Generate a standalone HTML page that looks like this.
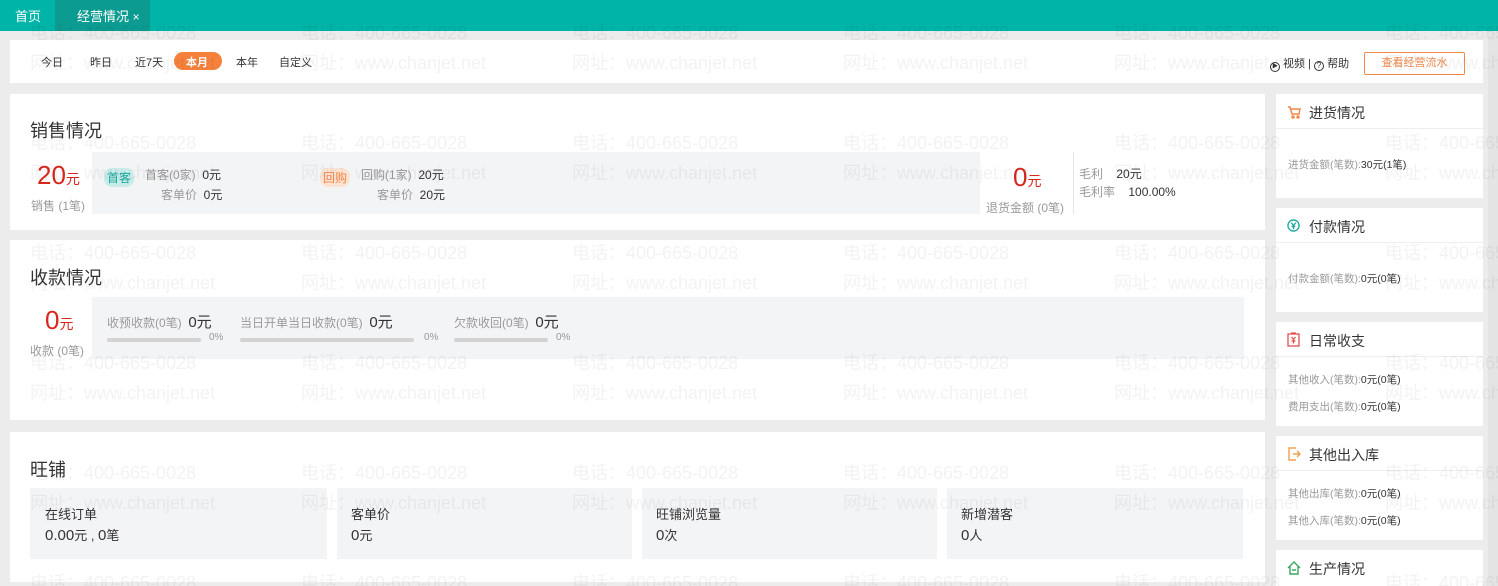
<!DOCTYPE html>
<html><head><meta charset="utf-8">
<style>
*{margin:0;padding:0;box-sizing:border-box}
html,body{width:1498px;height:586px;overflow:hidden}
body{background:#ececec;font-family:"Liberation Sans","Noto Sans CJK SC",sans-serif;position:relative;color:#333}
.a{position:absolute}
.top{left:0;top:0;width:1498px;height:31px;background:#00b4a8}
.card{background:#fff;position:absolute}
.t{font-size:12px;white-space:nowrap}
.g{color:#999}
.wm{position:absolute;font-size:18px;color:rgba(0,0,0,0.05);white-space:nowrap;pointer-events:none;z-index:10}
.box{background:#f3f4f5;position:absolute}
.bar{position:absolute;height:4px;background:#d3d3d3;border-radius:2px}
.rh{position:absolute;left:0;top:0;width:207px;height:35px;border-bottom:1px solid #eee}
.rh span{position:absolute;left:33px;top:9px;font-size:14px;color:#333}
</style></head><body>
<div class="a top"></div>
<div class="a" style="left:55px;top:0;width:95px;height:31px;background:#0c9b90"></div>
<div class="a t" style="left:15px;top:6px;font-size:13px;color:#fff">首页</div>
<div class="a t" style="left:77px;top:6px;font-size:13px;color:#fff">经营情况 <span style="font-size:12px">×</span></div>

<div class="card" style="left:10px;top:40px;width:1473px;height:43px"></div>
<div class="a t" style="left:41px;top:54px;font-size:11px">今日</div>
<div class="a t" style="left:90px;top:54px;font-size:11px">昨日</div>
<div class="a t" style="left:135px;top:54px;font-size:11px">近7天</div>
<div class="a" style="left:174px;top:52px;width:48px;height:18px;background:#f5813c;border-radius:9px"></div>
<div class="a t" style="left:186px;top:54px;font-size:11px;color:#fff;font-weight:bold">本月</div>
<div class="a t" style="left:236px;top:54px;font-size:11px">本年</div>
<div class="a t" style="left:279px;top:54px;font-size:11px">自定义</div>
<div class="a t" style="left:1270px;top:55px;font-size:11px"><span style="display:inline-block;width:10px;height:10px;border:1px solid #333;border-radius:50%;font-size:6px;line-height:8px;text-align:center;vertical-align:-1px">▶</span> 视频 | <span style="display:inline-block;width:10px;height:10px;border:1px solid #333;border-radius:50%;font-size:8px;line-height:8px;text-align:center;vertical-align:-1px">?</span> 帮助</div>
<div class="a" style="left:1364px;top:52px;width:101px;height:23px;border:1px solid #f0884a;border-radius:2px;color:#f0884a;font-size:11px;text-align:center;line-height:21px">查看经营流水</div>

<div class="card" style="left:10px;top:94px;width:1255px;height:136px"></div>
<div class="a" style="left:30px;top:117px;font-size:18px;color:#333">销售情况</div>
<div class="box" style="left:92px;top:152px;width:888px;height:62px"></div>
<div class="a" style="left:37px;top:160px;font-size:26px;color:#d9261c">20<span style="font-size:14px">元</span></div>
<div class="a t g" style="left:31px;top:197px">销售 (1笔)</div>
<div class="a t" style="left:104px;top:168px;background:#c9ecea;color:#1aa89c;border-radius:8px;padding:1px 3px">首客</div>
<div class="a t" style="left:145px;top:166px"><span class="g">首客(0家)</span>&nbsp; 0元</div>
<div class="a t" style="left:161px;top:186px"><span class="g">客单价</span>&nbsp; 0元</div>
<div class="a t" style="left:320px;top:168px;background:#fde3d4;color:#f0884a;border-radius:8px;padding:1px 3px">回购</div>
<div class="a t" style="left:361px;top:166px"><span class="g">回购(1家)</span>&nbsp; 20元</div>
<div class="a t" style="left:377px;top:186px"><span class="g">客单价</span>&nbsp; 20元</div>
<div class="a" style="left:1013px;top:162px;font-size:26px;color:#d9261c">0<span style="font-size:14px">元</span></div>
<div class="a t g" style="left:986px;top:199px">退货金额 (0笔)</div>
<div class="a" style="left:1073px;top:152px;width:1px;height:62px;background:#e5e5e5"></div>
<div class="a t" style="left:1079px;top:165px"><span class="g">毛利</span>&nbsp;&nbsp;&nbsp; 20元</div>
<div class="a t" style="left:1079px;top:183px"><span class="g">毛利率</span>&nbsp;&nbsp;&nbsp; 100.00%</div>

<div class="card" style="left:10px;top:240px;width:1255px;height:180px"></div>
<div class="a" style="left:30px;top:264px;font-size:18px">收款情况</div>
<div class="box" style="left:92px;top:297px;width:1152px;height:62px"></div>
<div class="a" style="left:45px;top:305px;font-size:26px;color:#d9261c">0<span style="font-size:14px">元</span></div>
<div class="a t g" style="left:30px;top:342px">收款 (0笔)</div>
<div class="a t" style="left:107px;top:311px"><span class="g">收预收款(0笔)</span>&nbsp; <span style="font-size:15px">0元</span></div>
<div class="bar" style="left:107px;top:338px;width:94px"></div><div class="a g" style="left:209px;top:332px;font-size:10px">0%</div>
<div class="a t" style="left:240px;top:311px"><span class="g">当日开单当日收款(0笔)</span>&nbsp; <span style="font-size:15px">0元</span></div>
<div class="bar" style="left:240px;top:338px;width:174px"></div><div class="a g" style="left:424px;top:332px;font-size:10px">0%</div>
<div class="a t" style="left:454px;top:311px"><span class="g">欠款收回(0笔)</span>&nbsp; <span style="font-size:15px">0元</span></div>
<div class="bar" style="left:454px;top:338px;width:94px"></div><div class="a g" style="left:556px;top:332px;font-size:10px">0%</div>

<div class="card" style="left:10px;top:432px;width:1255px;height:150px"></div>
<div class="a" style="left:30px;top:456px;font-size:18px">旺铺</div>
<div class="box" style="left:30px;top:488px;width:297px;height:71px"></div>
<div class="box" style="left:337px;top:488px;width:295px;height:71px"></div>
<div class="box" style="left:642px;top:488px;width:295px;height:71px"></div>
<div class="box" style="left:947px;top:488px;width:296px;height:71px"></div>
<div class="a t" style="left:45px;top:504px;font-size:13px">在线订单</div><div class="a t" style="left:45px;top:525px;font-size:15px">0.00<span style="font-size:13px">元 , </span>0<span style="font-size:13px">笔</span></div>
<div class="a t" style="left:351px;top:504px;font-size:13px">客单价</div><div class="a t" style="left:351px;top:525px;font-size:15px">0<span style="font-size:13px">元</span></div>
<div class="a t" style="left:656px;top:504px;font-size:13px">旺铺浏览量</div><div class="a t" style="left:656px;top:525px;font-size:15px">0<span style="font-size:13px">次</span></div>
<div class="a t" style="left:961px;top:504px;font-size:13px">新增潜客</div><div class="a t" style="left:961px;top:525px;font-size:15px">0<span style="font-size:13px">人</span></div>

<div class="card" style="left:1276px;top:94px;width:207px;height:104px"><div class="rh"><svg class="a" style="left:11px;top:11px" width="14" height="14" viewBox="0 0 14 14" fill="none" stroke="#f0884a" stroke-width="1.5"><path d="M1 2h2l2 7h7l1-5H4"/><circle cx="6" cy="12" r="1"/><circle cx="11" cy="12" r="1"/></svg><span>进货情况</span></div><div class="a t" style="left:12px;top:63px;font-size:10.5px"><span class="g">进货金额(笔数):</span>30元(1笔)</div></div>
<div class="card" style="left:1276px;top:208px;width:207px;height:104px"><div class="rh"><svg class="a" style="left:11px;top:11px" width="13" height="13" viewBox="0 0 14 14" fill="none" stroke="#1aa89c" stroke-width="1.4"><circle cx="7" cy="7" r="6"/><path d="M4.5 4l2.5 3 2.5-3M7 7v4M5 8h4"/></svg><span>付款情况</span></div><div class="a t" style="left:12px;top:63px;font-size:10.5px"><span class="g">付款金额(笔数):</span>0元(0笔)</div></div>
<div class="card" style="left:1276px;top:322px;width:207px;height:104px"><div class="rh"><svg class="a" style="left:11px;top:10px" width="13" height="15" viewBox="0 0 13 15" fill="none" stroke="#e05050" stroke-width="1.3"><rect x="1" y="2" width="11" height="12"/><path d="M4 1h5M4.5 5l2 2.5 2-2.5M6.5 7.5v4M4.5 9h4"/></svg><span>日常收支</span></div><div class="a t" style="left:12px;top:50px;font-size:10.5px"><span class="g">其他收入(笔数):</span>0元(0笔)</div><div class="a t" style="left:12px;top:77px;font-size:10.5px"><span class="g">费用支出(笔数):</span>0元(0笔)</div></div>
<div class="card" style="left:1276px;top:436px;width:207px;height:104px"><div class="rh"><svg class="a" style="left:11px;top:11px" width="14" height="14" viewBox="0 0 14 14" fill="none" stroke="#f0a050" stroke-width="1.4"><path d="M9 1H2v12h7M6 7h7M10 4l3 3-3 3"/></svg><span>其他出入库</span></div><div class="a t" style="left:12px;top:50px;font-size:10.5px"><span class="g">其他出库(笔数):</span>0元(0笔)</div><div class="a t" style="left:12px;top:77px;font-size:10.5px"><span class="g">其他入库(笔数):</span>0元(0笔)</div></div>
<div class="card" style="left:1276px;top:550px;width:207px;height:36px"><div class="rh" style="border:none"><svg class="a" style="left:11px;top:11px" width="14" height="14" viewBox="0 0 14 14" fill="none" stroke="#3aa860" stroke-width="1.4"><path d="M1 7L7 1l6 6M3 5v8h8V5M5 9h4"/></svg><span>生产情况</span></div></div>
<div class="a" style="left:1488px;top:31px;width:10px;height:555px;background:#e4e4e4"></div>

<div class="wm" style="left:30px;top:19px">电话：400-665-0028</div><div class="wm" style="left:30px;top:49px">网址：www.chanjet.net</div>
<div class="wm" style="left:301px;top:19px">电话：400-665-0028</div><div class="wm" style="left:301px;top:49px">网址：www.chanjet.net</div>
<div class="wm" style="left:572px;top:19px">电话：400-665-0028</div><div class="wm" style="left:572px;top:49px">网址：www.chanjet.net</div>
<div class="wm" style="left:843px;top:19px">电话：400-665-0028</div><div class="wm" style="left:843px;top:49px">网址：www.chanjet.net</div>
<div class="wm" style="left:1114px;top:19px">电话：400-665-0028</div><div class="wm" style="left:1114px;top:49px">网址：www.chanjet.net</div>
<div class="wm" style="left:1385px;top:19px">电话：400-665-0028</div><div class="wm" style="left:1385px;top:49px">网址：www.chanjet.net</div>
<div class="wm" style="left:30px;top:129px">电话：400-665-0028</div><div class="wm" style="left:30px;top:159px">网址：www.chanjet.net</div>
<div class="wm" style="left:301px;top:129px">电话：400-665-0028</div><div class="wm" style="left:301px;top:159px">网址：www.chanjet.net</div>
<div class="wm" style="left:572px;top:129px">电话：400-665-0028</div><div class="wm" style="left:572px;top:159px">网址：www.chanjet.net</div>
<div class="wm" style="left:843px;top:129px">电话：400-665-0028</div><div class="wm" style="left:843px;top:159px">网址：www.chanjet.net</div>
<div class="wm" style="left:1114px;top:129px">电话：400-665-0028</div><div class="wm" style="left:1114px;top:159px">网址：www.chanjet.net</div>
<div class="wm" style="left:1385px;top:129px">电话：400-665-0028</div><div class="wm" style="left:1385px;top:159px">网址：www.chanjet.net</div>
<div class="wm" style="left:30px;top:239px">电话：400-665-0028</div><div class="wm" style="left:30px;top:269px">网址：www.chanjet.net</div>
<div class="wm" style="left:301px;top:239px">电话：400-665-0028</div><div class="wm" style="left:301px;top:269px">网址：www.chanjet.net</div>
<div class="wm" style="left:572px;top:239px">电话：400-665-0028</div><div class="wm" style="left:572px;top:269px">网址：www.chanjet.net</div>
<div class="wm" style="left:843px;top:239px">电话：400-665-0028</div><div class="wm" style="left:843px;top:269px">网址：www.chanjet.net</div>
<div class="wm" style="left:1114px;top:239px">电话：400-665-0028</div><div class="wm" style="left:1114px;top:269px">网址：www.chanjet.net</div>
<div class="wm" style="left:1385px;top:239px">电话：400-665-0028</div><div class="wm" style="left:1385px;top:269px">网址：www.chanjet.net</div>
<div class="wm" style="left:30px;top:349px">电话：400-665-0028</div><div class="wm" style="left:30px;top:379px">网址：www.chanjet.net</div>
<div class="wm" style="left:301px;top:349px">电话：400-665-0028</div><div class="wm" style="left:301px;top:379px">网址：www.chanjet.net</div>
<div class="wm" style="left:572px;top:349px">电话：400-665-0028</div><div class="wm" style="left:572px;top:379px">网址：www.chanjet.net</div>
<div class="wm" style="left:843px;top:349px">电话：400-665-0028</div><div class="wm" style="left:843px;top:379px">网址：www.chanjet.net</div>
<div class="wm" style="left:1114px;top:349px">电话：400-665-0028</div><div class="wm" style="left:1114px;top:379px">网址：www.chanjet.net</div>
<div class="wm" style="left:1385px;top:349px">电话：400-665-0028</div><div class="wm" style="left:1385px;top:379px">网址：www.chanjet.net</div>
<div class="wm" style="left:30px;top:459px">电话：400-665-0028</div><div class="wm" style="left:30px;top:489px">网址：www.chanjet.net</div>
<div class="wm" style="left:301px;top:459px">电话：400-665-0028</div><div class="wm" style="left:301px;top:489px">网址：www.chanjet.net</div>
<div class="wm" style="left:572px;top:459px">电话：400-665-0028</div><div class="wm" style="left:572px;top:489px">网址：www.chanjet.net</div>
<div class="wm" style="left:843px;top:459px">电话：400-665-0028</div><div class="wm" style="left:843px;top:489px">网址：www.chanjet.net</div>
<div class="wm" style="left:1114px;top:459px">电话：400-665-0028</div><div class="wm" style="left:1114px;top:489px">网址：www.chanjet.net</div>
<div class="wm" style="left:1385px;top:459px">电话：400-665-0028</div><div class="wm" style="left:1385px;top:489px">网址：www.chanjet.net</div>
<div class="wm" style="left:30px;top:569px">电话：400-665-0028</div>
<div class="wm" style="left:301px;top:569px">电话：400-665-0028</div>
<div class="wm" style="left:572px;top:569px">电话：400-665-0028</div>
<div class="wm" style="left:843px;top:569px">电话：400-665-0028</div>
<div class="wm" style="left:1114px;top:569px">电话：400-665-0028</div>
<div class="wm" style="left:1385px;top:569px">电话：400-665-0028</div>
</body></html>
